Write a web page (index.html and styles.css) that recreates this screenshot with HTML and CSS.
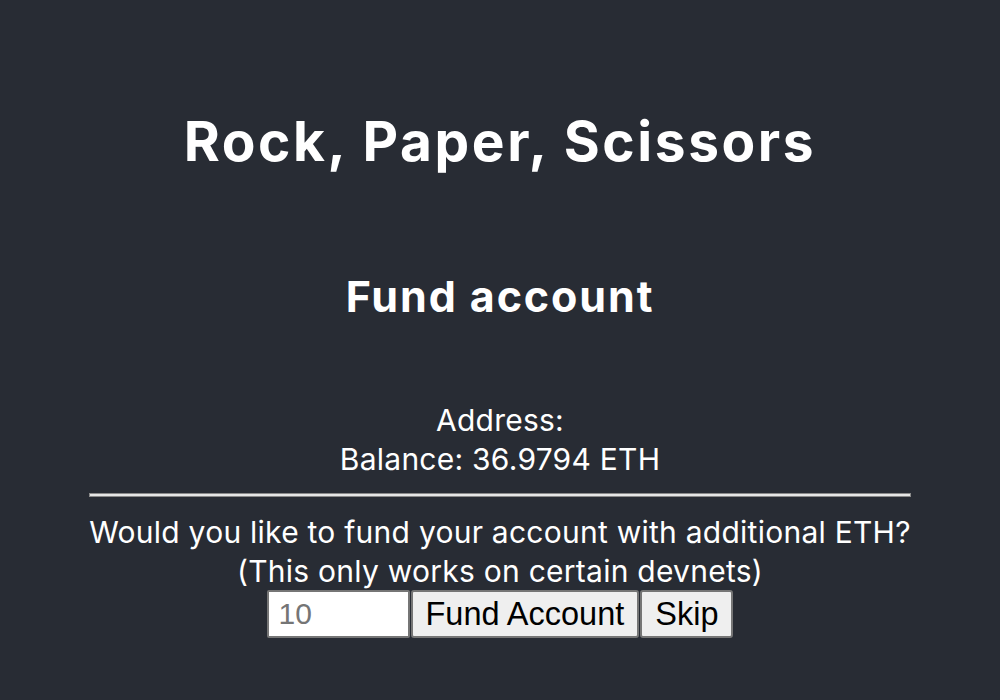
FILE: index.html
```html
<!DOCTYPE html>
<html lang="en">
<head>
<meta charset="utf-8">
<title>Rock, Paper, Scissors</title>
<link rel="stylesheet" href="styles.css">
</head>
<body>
<div class="app">
  <h1 class="title">Rock, Paper, Scissors</h1>
  <div class="panel">
    <h2 class="subtitle">Fund account</h2>
    <div class="info">
      <div>Address: </div>
      <div>Balance: 36.9794 ETH</div>
    </div>
    <hr class="divider">
    <div class="prompt">
      <div>Would you like to fund your account with additional ETH?</div>
      <div>(This only works on certain devnets)</div>
    </div>
    <div class="controls">
      <input class="amount" type="text" placeholder="10">
      <button class="btn">Fund Account</button>
      <button class="btn">Skip</button>
    </div>
  </div>
</div>
</body>
</html>
```

FILE: styles.css
```css
html, body {
  margin: 0;
  padding: 0;
  background: #282c34;
}
.app {
  min-height: 700px;
  display: flex;
  flex-direction: column;
  align-items: center;
  color: #ffffff;
  font-family: "Inter", "Noto Sans", sans-serif;
  text-align: center;
}
.title {
  margin: 110px 0 0;
  font-size: 55px;
  line-height: 62px;
  font-weight: 700;
  letter-spacing: 2.6px;
}
.panel {
  display: flex;
  flex-direction: column;
  align-items: stretch;
}
.subtitle {
  margin: 100px 0 0;
  font-size: 43px;
  line-height: 48px;
  font-weight: 700;
  letter-spacing: 1.9px;
}
.info {
  margin-top: 81px;
  font-size: 30px;
  line-height: 39px;
  letter-spacing: 0.25px;
}
.divider {
  margin: 14px 0 16px;
  height: 2px;
  border: 1px solid #8a8a8a;
  background: #e6e6e6;
}
.prompt {
  font-size: 30px;
  line-height: 39px;
  letter-spacing: 0.25px;
}
.controls {
  display: flex;
  justify-content: center;
  gap: 1px;
  margin-top: -1px;
}
.amount {
  box-sizing: border-box;
  width: 143px;
  height: 48px;
  margin: 0;
  padding: 0 10px;
  border: 2px solid #767676;
  border-radius: 2px;
  background: #ffffff;
  font-family: "Liberation Sans", Arial, sans-serif;
  font-size: 30px;
  color: #000;
}
.amount::placeholder {
  color: #757575;
}
.btn {
  box-sizing: border-box;
  height: 48px;
  margin: 0;
  padding: 0 13px;
  border: 2px solid #767676;
  border-radius: 3px;
  background: #efefef;
  color: #000;
  font-family: "Liberation Sans", Arial, sans-serif;
  font-size: 32.5px;
}
```
